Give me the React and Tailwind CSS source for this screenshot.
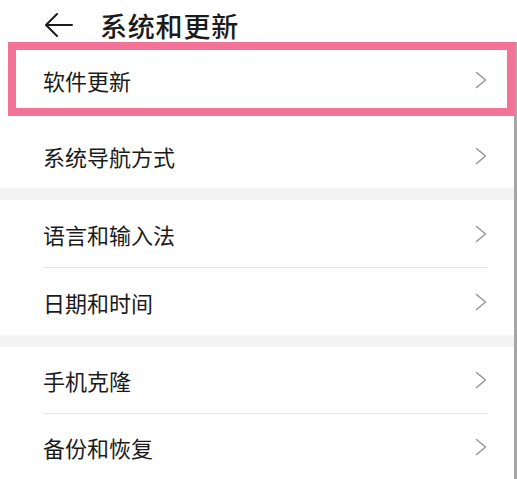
import React from "react"

const font = { fontFamily: '"Noto Sans CJK SC", "Noto Sans", sans-serif' }

const Chevron = () => (
    <svg width="13" height="18" viewBox="0 0 13 18" fill="none" className="shrink-0">
        <path d="M1.5 1.5 L10.5 9 L1.5 16.5" stroke="#9a9a9a" strokeWidth="1.6" strokeLinecap="round" strokeLinejoin="round" />
    </svg>
)

const Row = ({ label, h, divider, pt }) => (
    <div className={`flex items-center pl-[43px] pr-[26px] ${h} ${pt || ""}`}>
        <div className={`flex items-center justify-between w-full h-full ${divider ? "border-b border-[#e6e6e6]" : ""}`}>
            <span className="text-[22px] text-[#1b1b1b] leading-none">{label}</span>
            <Chevron />
        </div>
    </div>
)

const App = () => {
    return (
        <div className="w-[517px] h-[479px] bg-white overflow-hidden relative" style={font}>
            <div className="flex items-center h-[42px] pl-[44px] gap-[27px] pt-[8px]">
                <svg width="29" height="24" viewBox="0 0 29 24" fill="none">
                    <path d="M28 12 H2 M13 1 L2 12 L13 23" stroke="#1b1b1b" strokeWidth="2" strokeLinecap="round" strokeLinejoin="round" />
                </svg>
                <h1 className="text-[27px] text-[#1b1b1b] font-medium leading-none tracking-[0.8px]">系统和更新</h1>
            </div>

            <div className="border-r-[3px] border-[#a6a6a6]">
                <Row label="软件更新" h="h-[76px]" />
                <Row label="系统导航方式" h="h-[70px]" pt="pt-[6px]" />
                <div className="h-[12px] bg-[#f4f4f4]"></div>
                <Row label="语言和输入法" h="h-[68px]" divider />
                <Row label="日期和时间" h="h-[67px]" pt="pt-[1px]" />
                <div className="h-[12px] bg-[#f4f4f4]"></div>
                <Row label="手机克隆" h="h-[67px]" divider />
                <Row label="备份和恢复" h="h-[67px]" divider />
            </div>

            {/* highlight box drawn over the first row */}
            <div className="absolute left-[8px] top-[42px] w-[507px] h-[74px] border-[8px] border-[#f27298]"></div>
        </div>
    )
}

export default App
